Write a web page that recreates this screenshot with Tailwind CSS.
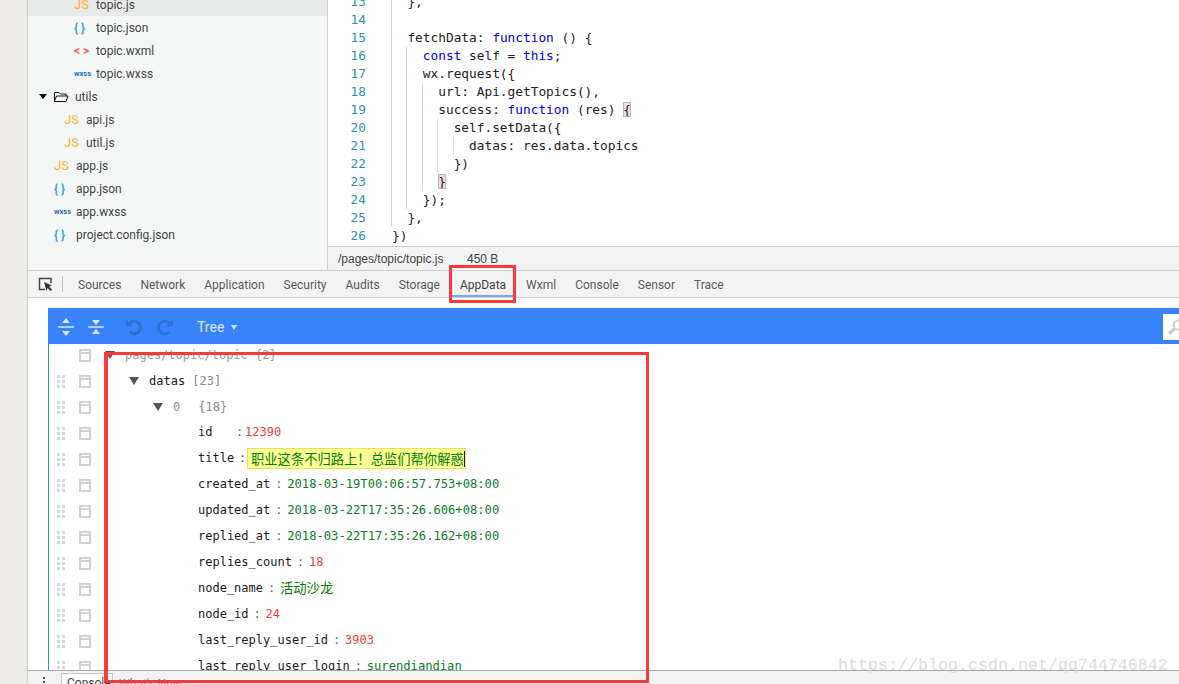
<!DOCTYPE html>
<html lang="en">
<head>
  <meta charset="UTF-8">
  <title>AppData panel</title>
  <script src="https://cdn.jsdelivr.net/npm/@tailwindcss/browser@4"></script>
</head>
<body class="bg-white">
<div class="relative flex h-[684px] w-[1179px] overflow-hidden bg-[#ecebe8] font-['Roboto',sans-serif]">
  <div class="w-[27px] shrink-0"></div>

  <div class="flex min-w-0 flex-1 flex-col border-l border-[#cfcfcf] bg-white">
    <div class="flex h-[270px] shrink-0 overflow-hidden">
      <!-- file tree -->
      <div class="w-[299px] shrink-0 bg-[#f5f7f7] text-[12px] text-[#444]">
        <div class="-mt-[7px]">
          <div class="flex h-[23px] items-center bg-[#e8e9e9] pl-[46px]"><span class="w-[22px] text-[13px] text-[#fbb12f]">JS</span>topic.js</div>
          <div class="flex h-[23px] items-center pl-[46px]"><span class="w-[22px] font-bold text-[#1fa9e8]">{ }</span>topic.json</div>
          <div class="flex h-[23px] items-center pl-[46px]"><span class="w-[22px] font-bold text-[#f2683a]">&lt; &gt;</span>topic.wxml</div>
          <div class="flex h-[23px] items-center pl-[46px]"><span class="w-[22px] text-[7.5px] font-bold text-[#1b75bb]">wxss</span>topic.wxss</div>
          <div class="flex h-[23px] items-center pl-[11px]">
            <span class="h-0 w-0 border-x-[4px] border-t-[5px] border-x-transparent border-t-black"></span>
            <svg class="ml-[6px] mr-[6px]" width="16" height="12" viewBox="0 0 16 12" fill="none" stroke="#111" stroke-width="1"><path d="M1.5 10.5V1.5H6L7.5 3H13V5M1.5 10.5L3.5 5H15L13 10.5Z"/></svg>
            utils
          </div>
          <div class="flex h-[23px] items-center pl-[36px]"><span class="w-[22px] text-[13px] text-[#fbb12f]">JS</span>api.js</div>
          <div class="flex h-[23px] items-center pl-[36px]"><span class="w-[22px] text-[13px] text-[#fbb12f]">JS</span>util.js</div>
          <div class="flex h-[23px] items-center pl-[26px]"><span class="w-[22px] text-[13px] text-[#fbb12f]">JS</span>app.js</div>
          <div class="flex h-[23px] items-center pl-[26px]"><span class="w-[22px] font-bold text-[#1fa9e8]">{ }</span>app.json</div>
          <div class="flex h-[23px] items-center pl-[26px]"><span class="w-[22px] text-[7.5px] font-bold text-[#1b75bb]">wxss</span>app.wxss</div>
          <div class="flex h-[23px] items-center pl-[26px]"><span class="w-[22px] font-bold text-[#1fa9e8]">{ }</span>project.config.json</div>
        </div>
      </div>

      <div class="flex min-w-0 flex-1 flex-col border-l border-[#d0d0d0]">
        <!-- code -->
        <div class="relative min-h-0 flex-1 overflow-hidden bg-white font-['DejaVu_Sans_Mono',monospace] text-[12.8px] leading-[18px] text-[#222]">
          <div class="-mt-[7px] [&>div>span]:whitespace-pre">
            <div class="flex"><span class="w-[38px] text-right text-[#2f8fb0]">13</span><span class="ml-[26px]">  },</span></div>
            <div class="flex h-[18px]"><span class="w-[38px] text-right text-[#2f8fb0]">14</span></div>
            <div class="flex"><span class="w-[38px] text-right text-[#2f8fb0]">15</span><span class="ml-[26px]">  fetchData: <span class="text-[#0000e0]">function</span> () {</span></div>
            <div class="flex"><span class="w-[38px] text-right text-[#2f8fb0]">16</span><span class="ml-[26px]">    <span class="text-[#0000e0]">const</span> self = <span class="text-[#0000e0]">this</span>;</span></div>
            <div class="flex"><span class="w-[38px] text-right text-[#2f8fb0]">17</span><span class="ml-[26px]">    wx.request({</span></div>
            <div class="flex"><span class="w-[38px] text-right text-[#2f8fb0]">18</span><span class="ml-[26px]">      url: Api.getTopics(),</span></div>
            <div class="flex"><span class="w-[38px] text-right text-[#2f8fb0]">19</span><span class="ml-[26px]">      success: <span class="text-[#0000e0]">function</span> (res) <span class="bg-[#e4e4de] text-[#550033] outline outline-1 -outline-offset-1 outline-[#b8b8b8]">{</span></span></div>
            <div class="flex"><span class="w-[38px] text-right text-[#2f8fb0]">20</span><span class="ml-[26px]">        self.setData({</span></div>
            <div class="flex"><span class="w-[38px] text-right text-[#2f8fb0]">21</span><span class="ml-[26px]">          datas: res.data.topics</span></div>
            <div class="flex"><span class="w-[38px] text-right text-[#2f8fb0]">22</span><span class="ml-[26px]">        })</span></div>
            <div class="flex"><span class="w-[38px] text-right text-[#2f8fb0]">23</span><span class="ml-[26px]">      <span class="bg-[#e4e4de] text-[#550033] outline outline-1 -outline-offset-1 outline-[#b8b8b8]">}</span></span></div>
            <div class="flex"><span class="w-[38px] text-right text-[#2f8fb0]">24</span><span class="ml-[26px]">    });</span></div>
            <div class="flex"><span class="w-[38px] text-right text-[#2f8fb0]">25</span><span class="ml-[26px]">  },</span></div>
            <div class="flex"><span class="w-[38px] text-right text-[#2f8fb0]">26</span><span class="ml-[26px]">})</span></div>
          </div>
          <!-- indent guides -->
          <span class="absolute left-[63px] top-0 h-[226px] w-px bg-[#d8d8d8]"></span>
          <span class="absolute left-[78px] top-[47px] h-[162px] w-px bg-[#d8d8d8]"></span>
          <span class="absolute left-[94px] top-[83px] h-[108px] w-px bg-[#d8d8d8]"></span>
          <span class="absolute left-[109px] top-[119px] h-[54px] w-px bg-[#d8d8d8]"></span>
          <span class="absolute left-[125px] top-[137px] h-[18px] w-px bg-[#d8d8d8]"></span>
        </div>

        <!-- status bar -->
        <div class="flex h-[24px] shrink-0 items-center border-t border-[#d0d0d0] bg-[#f3f3f3] pl-[10px] font-['Liberation_Sans',sans-serif] text-[12px] text-[#444]">
          <span class="w-[129px]">/pages/topic/topic.js</span><span>450 B</span>
        </div>
      </div>
    </div>

    <!-- devtools tabs -->
    <div class="flex h-[28px] shrink-0 items-center border-y border-[#d0d0d0] bg-[#f3f3f3] text-[12px] text-[#5a5a5a]">
      <svg class="ml-[10px]" width="15" height="15" viewBox="0 0 15 15"><path d="M7 12.5H1.5V1.5H13V6" fill="none" stroke="#444" stroke-width="1.5"/><path d="M6 5l8 3.5-3 1 3 3-1.5 1.5-3-3-1 3z" fill="#333"/></svg>
      <span class="ml-[9px] h-[16px] w-px bg-[#c8c8c8]"></span>
      <div class="ml-[15px] flex h-full items-center gap-[19px] pt-[2px]">
        <span>Sources</span><span>Network</span><span>Application</span><span>Security</span><span>Audits</span><span>Storage</span>
        <span class="-mx-[7px] flex h-full items-center border-b-2 border-[#7aa7f5] px-[8px] pt-[1px] text-[#444]">AppData</span>
        <span>Wxml</span><span>Console</span><span>Sensor</span><span>Trace</span>
      </div>
    </div>

    <!-- AppData panel -->
    <div class="min-h-0 flex-1 pl-[20px] pt-[10px]">
      <div class="flex h-full flex-col overflow-hidden border-l border-[#3883fa]">
        <div class="relative z-10 flex h-[36px] shrink-0 items-center bg-[#3883fa] pt-[2px]">
          <svg class="ml-[9px]" width="16" height="20" viewBox="0 0 16 20" fill="#d7e6fe"><path d="M8 1l4 5H4zM8 19l-4-5h8zM0 9.3h16v1.4H0z"/></svg>
          <svg class="ml-[14px]" width="16" height="20" viewBox="0 0 16 20" fill="#d7e6fe"><path d="M8 8L4 3h8zM8 12l4 5H4zM0 9.3h16v1.4H0z"/></svg>
          <svg class="ml-[21px]" width="18" height="18" viewBox="0 0 18 18" fill="none" stroke="#2e6fd6" stroke-width="3"><path d="M5 5a6.2 6.2 0 1 1 0 9"/><path d="M1 1.500v7h7z" fill="#2e6fd6" stroke="none"/></svg>
          <svg class="ml-[13px]" width="18" height="18" viewBox="0 0 18 18" fill="none" stroke="#2e6fd6" stroke-width="3"><path d="M13 5a6.2 6.200 0 1 0 0 9"/><path d="M17 1.500v7h-7z" fill="#2e6fd6" stroke="none"/></svg>
          <span class="ml-[23px] text-[14px] text-[#d7e6fe]">Tree</span>
          <span class="ml-[7px] h-0 w-0 border-x-[3px] border-t-[5px] border-x-transparent border-t-[#d7e6fe]"></span>
          <div class="ml-auto flex h-[26px] w-[16px] items-center overflow-hidden bg-white pl-[4px]">
            <svg class="shrink-0" width="18" height="18" viewBox="0 0 18 18" fill="none" stroke="#cfcfcf"><circle cx="11" cy="7" r="4.5" stroke-width="2"/><path d="M7.5 10.500L2 15.500" stroke-width="3.5"/></svg>
          </div>
        </div>

        <div id="rows" class="-mt-[3px] font-['DejaVu_Sans_Mono',monospace] text-[12px] text-[#1a1a1a]"></div>
      </div>
    </div>

    <!-- console drawer -->
    <div class="relative z-10 flex h-[14px] shrink-0 items-end overflow-hidden border-t border-[#a8a8a8] bg-[#f3f3f3] text-[12px] text-[#444]">
      <span class="mb-[1px] ml-[15px] flex flex-col gap-[2px] self-end"><i class="h-[2px] w-[2px] bg-[#555]"></i><i class="h-[2px] w-[2px] bg-[#555]"></i></span>
      <span class="ml-[16px] h-[11px] w-[52px] border border-b-0 border-[#c8c8c8] bg-white pl-[5px] leading-[18px]">Console</span>
      <span class="ml-[6px] h-[9px] leading-[18px] text-[#777]">What's New</span>
    </div>
  </div>

  <!-- annotations on top of the screenshot -->
  <div class="absolute left-[449px] top-[265px] z-20 h-[38px] w-[67px] border-[3px] border-[#f93a3a]"></div>
  <div class="absolute left-[104px] top-[352px] z-20 h-[331px] w-[545px] border-[3px] border-l-4 border-[#f93a3a]"></div>
  <div class="absolute left-[838px] top-[653px] z-30 font-['Liberation_Mono',monospace] text-[16.67px] text-[#dcdcdc]">https://blog.csdn.net/qq744746842</div>
</div>

<script>
  const grip = '<span class="ml-[8px] mt-[2px] grid w-[8px] grid-cols-2 gap-[2px]">' + '<i class="h-[3px] w-[3px] bg-[#d8d8d8]"></i>'.repeat(6) + '</span>';
  const check = '<span class="mt-[2px] h-[13px] w-[12px] shrink-0 border-2 border-[#d2d2d2]"><span class="mt-[1px] block h-[2px] bg-[#d2d2d2]"></span></span>';
  const arrow = '<span class="mt-[2px] h-0 w-0 border-x-[5px] border-t-[8px] border-x-transparent border-t-[#555]"></span>';
  const sep = '<span class="w-[17px] pl-[5px] text-[#666]">:</span>';
  const num = v => `<span class="text-[#ee422e]">${v}</span>`;
  const str = v => `<span class="text-[12.15px] text-[#0a7d26]">${v}</span>`;
  const cjk = v => `<span class="font-['Noto_Sans_CJK_SC',sans-serif] text-[13.3px] text-[#008000]">${v}</span>`;
  const row = inner => `<div class="flex h-[26px] items-center">${grip}<span class="w-[14px]"></span>${check}${inner}</div>`;
  const key = (k, v) => row(`<span class="ml-[107px]">${k}</span>${sep}${v}`);

  document.getElementById('rows').innerHTML =
    `<div class="flex h-[26px] items-center"><span class="ml-[30px] w-0"></span>${check}<span class="w-[14px]"></span>${arrow}<span class="ml-[10px] mt-[2px] text-[#999]">pages/topic/topic {2}</span></div>` +
    row(`<span class="w-[38px]"></span>${arrow}<span class="ml-[10px] mt-[1px]">datas <span class="text-[#888]">[23]</span></span>`) +
    row(`<span class="w-[62px]"></span>${arrow}<span class="ml-[10px] mt-[1px] text-[#888]">0<span class="ml-[18px]">{18}</span></span>`) +
    row(`<span class="ml-[107px] w-[38px]">id</span><span class="w-[9px] text-[#666]">:</span>${num('12390')}`) +
    row(`<span class="ml-[107px] w-[41px]">title</span><span class="w-[8px] text-[#666]">:</span><span class="mt-[1px] flex h-[21px] w-[219px] items-center border border-[#e6e64a] bg-[#ffff99] pl-[3px] font-['Noto_Sans_CJK_SC',sans-serif] text-[13.3px] text-[#008000]">职业这条不归路上！总监们帮你解惑<span class="h-[16px] w-px bg-[#222]"></span></span>`) +
    key('created_at', str('2018-03-19T00:06:57.753+08:00')) +
    key('updated_at', str('2018-03-22T17:35:26.606+08:00')) +
    key('replied_at', str('2018-03-22T17:35:26.162+08:00')) +
    key('replies_count', num('18')) +
    key('node_name', cjk('活动沙龙')) +
    key('node_id', num('24')) +
    key('last_reply_user_id', num('3903')) +
    key('last_reply_user_login', str('surendiandian'));
</script>
</body>
</html>
